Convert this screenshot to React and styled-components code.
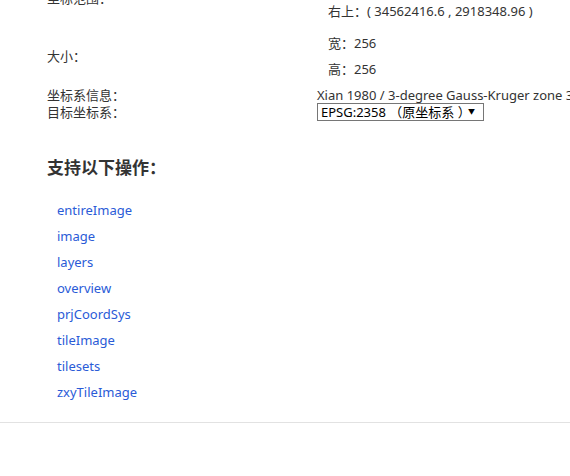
import styled, { createGlobalStyle } from "styled-components";

const GlobalStyle = createGlobalStyle`
    body {
        margin: 0;
        background: #fff;
        font-family: "Noto Sans", "Noto Sans CJK SC", sans-serif;
        font-size: 13px;
        color: #333;
        overflow: hidden;
    }
`;

const Page = styled.div`
    margin-top: -28px;
`;

const Content = styled.div`
    padding-left: 47px;
`;

const InfoTable = styled.div`
    display: flex;
    flex-direction: column;
`;

const Row = styled.div`
    display: flex;
    align-items: center;
    margin-top: ${(p) => p.$gap || 0}px;
    line-height: 16px;
`;

const Label = styled.div`
    width: 270px;
    flex-shrink: 0;
`;

const ValueList = styled.div`
    display: flex;
    flex-direction: column;
    padding-left: 11px;
    line-height: 26px;
`;

const Value = styled.div`
    white-space: nowrap;
`;

const SelectWrap = styled.div`
    position: relative;
    width: 167px;
    height: 18px;
`;

const Select = styled.select`
    appearance: none;
    width: 100%;
    height: 100%;
    margin: 0;
    padding: 0 0 0 3px;
    border: 1px solid #767676;
    border-radius: 0;
    background: #fff;
    font-family: "Noto Sans", "Noto Sans CJK SC", sans-serif;
    font-size: 13px;
    color: #000;
    line-height: 16px;
`;

const Arrow = styled.span`
    position: absolute;
    right: 9px;
    top: 4px;
    font-size: 7px;
    line-height: 9px;
    color: #000;
    pointer-events: none;
`;

const Heading = styled.h3`
    margin: 36px 0 0;
    font-size: 17px;
    font-weight: bold;
    line-height: 22px;
    color: #333;
`;

const OpList = styled.ul`
    list-style: none;
    margin: 18px 0 0;
    padding: 0 0 0 10px;
    line-height: 26px;
`;

const OpLink = styled.a`
    color: #2a5bd7;
    text-decoration: none;
`;

const Divider = styled.hr`
    margin: 17px 0 0;
    border: 0;
    border-top: 1px solid #e2e2e2;
    height: 0;
`;

const ops = ["entireImage", "image", "layers", "overview", "prjCoordSys", "tileImage", "tilesets", "zxyTileImage"];

export default function App() {
    return (
        <Page>
            <GlobalStyle />
            <Content>
                <InfoTable>
                    <Row>
                        <Label>坐标范围：</Label>
                        <ValueList>
                            <Value>左下：( 34562160.6 , 2918092.96 )</Value>
                            <Value>右上：( 34562416.6 , 2918348.96 )</Value>
                        </ValueList>
                    </Row>
                    <Row $gap={6}>
                        <Label>大小：</Label>
                        <ValueList>
                            <Value>宽：256</Value>
                            <Value>高：256</Value>
                        </ValueList>
                    </Row>
                    <Row $gap={5}>
                        <Label>坐标系信息：</Label>
                        <Value>Xian 1980 / 3-degree Gauss-Kruger zone 34</Value>
                    </Row>
                    <Row>
                        <Label>目标坐标系：</Label>
                        <SelectWrap>
                            <Select defaultValue="2358">
                                <option value="2358">EPSG:2358 （原坐标系 ）</option>
                                <option value="4326">EPSG:4326</option>
                                <option value="3857">EPSG:3857</option>
                            </Select>
                            <Arrow>▼</Arrow>
                        </SelectWrap>
                    </Row>
                </InfoTable>
                <Heading>支持以下操作：</Heading>
                <OpList>
                    {ops.map((op) => (
                        <li key={op}>
                            <OpLink href={"#" + op}>{op}</OpLink>
                        </li>
                    ))}
                </OpList>
            </Content>
            <Divider />
        </Page>
    );
}
